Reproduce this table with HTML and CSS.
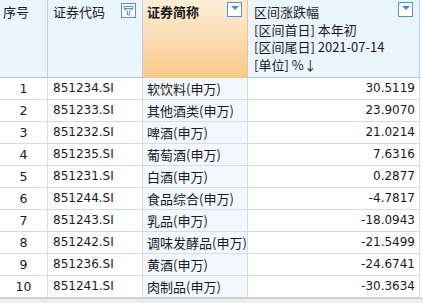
FILE: index.html
```html
<!DOCTYPE html>
<html>
<head>
<meta charset="utf-8">
<link rel="stylesheet" href="styles.css">
</head>
<body>
<div class="page">
  <div class="table">
    <div class="hcell h-seq"><span class="htext">序号</span></div>
    <div class="hcell h-code">
      <span class="htext">证券代码</span>
      <span class="ibtn filter"><svg width="11" height="11" viewBox="0 0 11 11"><path d="M1 1.5H10V3.5L6.5 6V10H4.5V6L1 3.5Z" fill="none" stroke="#5a8fd0" stroke-width="1"/><path d="M1 3.5H10" stroke="#5a8fd0" stroke-width="1"/></svg></span>
    </div>
    <div class="hcell h-name">
      <span class="htext bold">证券简称</span>
      <span class="ibtn drop"><span class="tri"></span></span>
    </div>
    <div class="hcell h-val">
      <div class="vlines">
        <span>区间涨跌幅</span>
        <span>[区间首日] 本年初</span>
        <span>[区间尾日] 2021-07-14</span>
        <span>[单位] %↓</span>
      </div>
      <span class="ibtn drop"><span class="tri"></span></span>
    </div>
  </div>
  <div class="rows" id="rows">
    <div class="row"><div class="c seq">1</div><div class="c code">851234.SI</div><div class="c name">软饮料(申万)</div><div class="c val">30.5119</div></div>
    <div class="row"><div class="c seq">2</div><div class="c code">851233.SI</div><div class="c name">其他酒类(申万)</div><div class="c val">23.9070</div></div>
    <div class="row"><div class="c seq">3</div><div class="c code">851232.SI</div><div class="c name">啤酒(申万)</div><div class="c val">21.0214</div></div>
    <div class="row"><div class="c seq">4</div><div class="c code">851235.SI</div><div class="c name">葡萄酒(申万)</div><div class="c val">7.6316</div></div>
    <div class="row"><div class="c seq">5</div><div class="c code">851231.SI</div><div class="c name">白酒(申万)</div><div class="c val">0.2877</div></div>
    <div class="row"><div class="c seq">6</div><div class="c code">851244.SI</div><div class="c name">食品综合(申万)</div><div class="c val">-4.7817</div></div>
    <div class="row"><div class="c seq">7</div><div class="c code">851243.SI</div><div class="c name">乳品(申万)</div><div class="c val">-18.0943</div></div>
    <div class="row"><div class="c seq">8</div><div class="c code">851242.SI</div><div class="c name">调味发酵品(申万)</div><div class="c val">-21.5499</div></div>
    <div class="row"><div class="c seq">9</div><div class="c code">851236.SI</div><div class="c name">黄酒(申万)</div><div class="c val">-24.6741</div></div>
    <div class="row"><div class="c seq">10</div><div class="c code">851241.SI</div><div class="c name">肉制品(申万)</div><div class="c val">-30.3634</div></div>
  </div>
  <div class="footer"></div>
</div>
</body>
</html>
```
FILE: styles.css
```css
html, body {
  margin: 0;
  padding: 0;
  background: #ffffff;
}
body {
  font-family: "DejaVu Sans", "Noto Sans CJK SC", sans-serif;
  font-size: 12px;
  color: #1a1a1a;
}
.page {
  width: 423px;
  height: 303px;
  overflow: hidden;
  display: flex;
  flex-direction: column;
}
.table {
  display: grid;
  grid-template-columns: 48px 95px 105px 172px;
  height: 78px;
  width: 420px;
}
.hcell {
  position: relative;
  background: #ebf5ff;
  border-right: 1px solid #b4d0ee;
  border-bottom: 1px solid #a9c8ea;
  box-sizing: border-box;
  padding: 3px 0 0 4px;
  font-family: "Noto Sans CJK SC", sans-serif;
  font-size: 13px;
}
.h-seq { padding-left: 3px; }
.h-code { padding-left: 5px; }
.h-name {
  background: linear-gradient(to bottom, #fdeed8 0%, #fbdcb0 50%, #f8c98a 100%);
  border-right: 1px solid #f2c489;
  border-bottom: 1px solid #f2c489;
  padding-left: 4px;
}
.h-val { padding-left: 6px; border-right: 1px solid #b4d0ee; }
.htext { line-height: 18px; display: block; }
.bold { font-weight: bold; }
.vlines {
  display: flex;
  flex-direction: column;
  line-height: 17.5px;
}
.vlines span { display: block; font-family: "Noto Sans CJK SC", sans-serif; }
.ibtn {
  position: absolute;
  top: 2px;
  width: 13px;
  height: 13px;
  background: #ffffff;
  border: 1px solid #5a8fd0;
  display: flex;
  align-items: center;
  justify-content: center;
}
.filter { right: 6px; top: 3px; }
.h-name .drop { right: 5px; }
.h-val .drop { right: 6px; }
.tri {
  width: 0;
  height: 0;
  border-left: 4px solid transparent;
  border-right: 4px solid transparent;
  border-top: 4px solid #4f86cc;
  margin-top: -3px;
}
.rows {
  width: 420px;
  display: flex;
  flex-direction: column;
}
.row {
  display: grid;
  grid-template-columns: 48px 95px 105px 172px;
  height: 22px;
}
.c {
  box-sizing: border-box;
  border-right: 1px solid #d6dce3;
  border-bottom: 1px solid #d6dce3;
  line-height: 21px;
  white-space: nowrap;
  overflow: hidden;
  background: #ffffff;
}
.seq { text-align: center; font-size: 12.5px; }
.code { padding-left: 5px; font-size: 12px; }
.name {
  padding-left: 4px;
  font-family: "Noto Sans CJK SC", sans-serif;
  font-size: 13px;
  background: #f2f8fe;
  overflow: visible;
}
.val { text-align: right; padding-right: 4px; font-size: 12px; }
.row:last-child .c { border-bottom: 1px solid #c9ced4; }
.footer {
  flex: 1;
  background: #ececec;
  border-top: 1px solid #d0d0d0;
}
```
